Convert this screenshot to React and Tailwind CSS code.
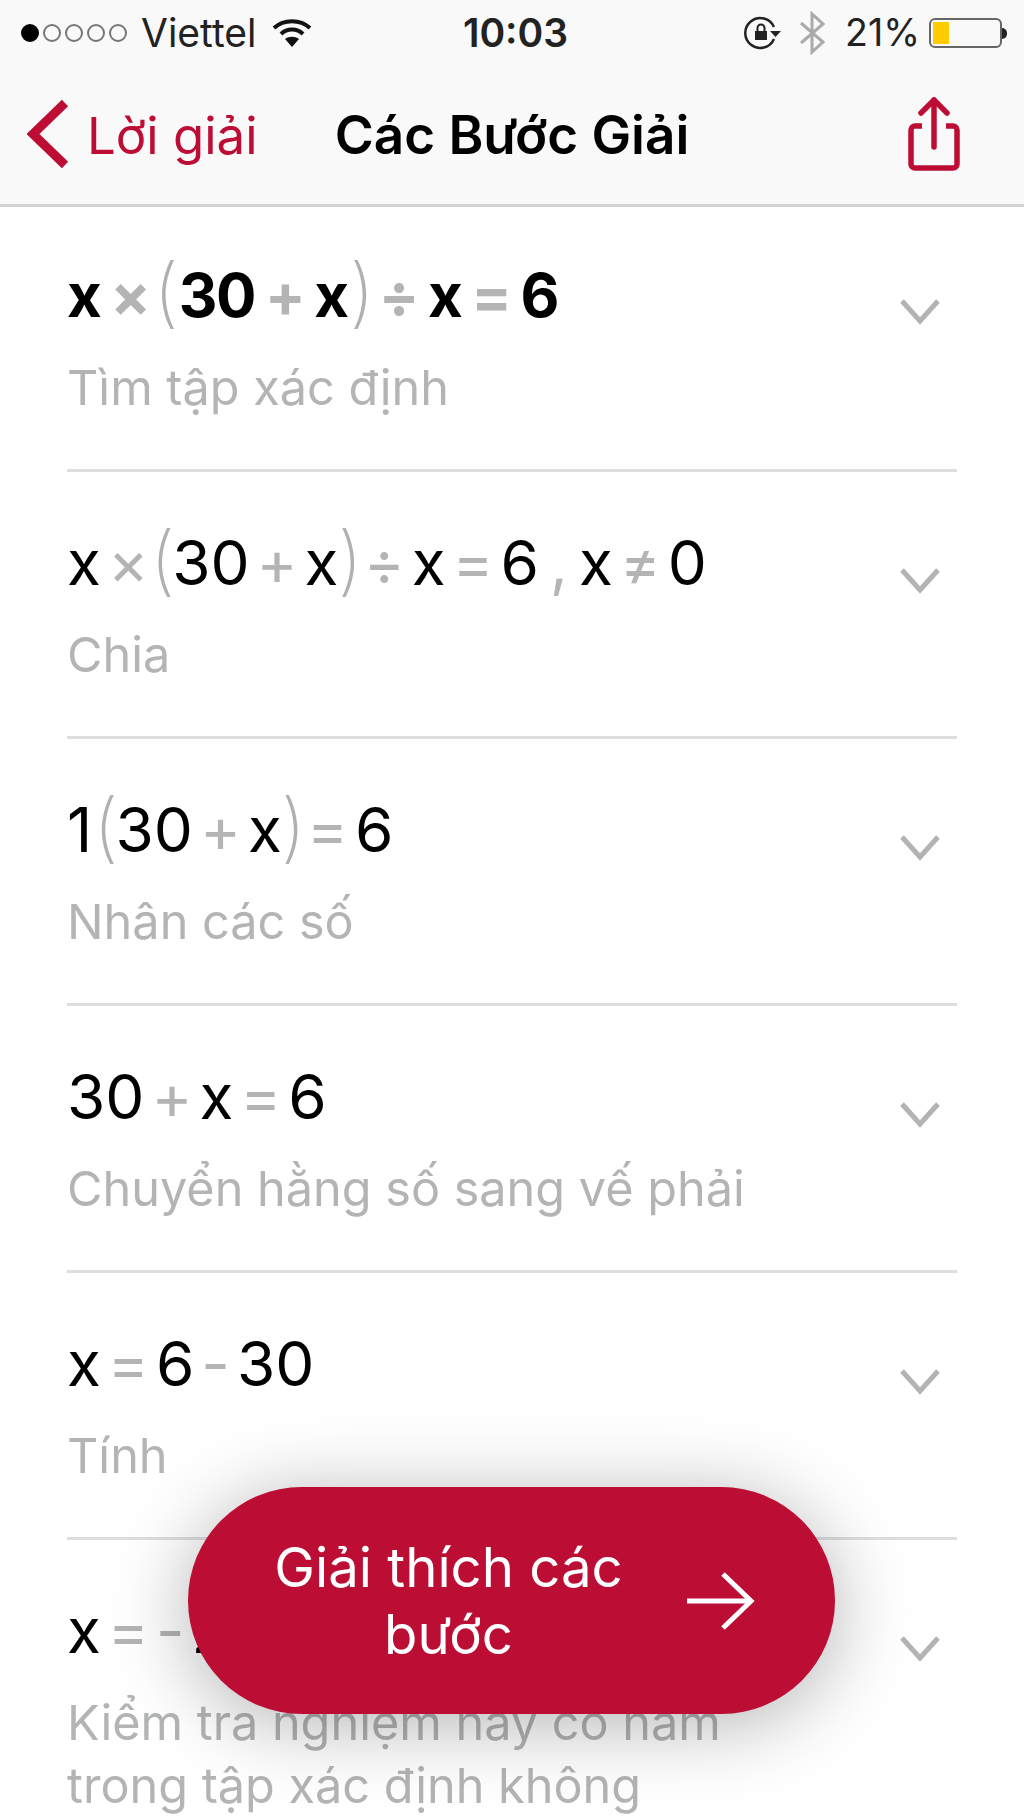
import React from 'react';

const steps = [
  { tokens: ['x', '×', '(', '30', '+', 'x', ')', '÷', 'x', '=', '6'], hint: ['Tìm tập xác định'], bold: true },
  { tokens: ['x', '×', '(', '30', '+', 'x', ')', '÷', 'x', '=', '6', ',', 'x', '≠', '0'], hint: ['Chia'] },
  { tokens: ['1', '(', '30', '+', 'x', ')', '=', '6'], hint: ['Nhân các số'] },
  { tokens: ['30', '+', 'x', '=', '6'], hint: ['Chuyển hằng số sang vế phải'] },
  { tokens: ['x', '=', '6', '-', '30'], hint: ['Tính'] },
  { tokens: ['x', '=', '-', '24'], hint: ['Kiểm tra nghiệm này có nằm', 'trong tập xác định không'] },
];

const OPERATORS = ['×', '+', '÷', '=', '≠', '-'];

function MathLine({ tokens, bold }) {
  return (
    <div className={`flex h-[70px] items-center leading-none text-black ${bold ? 'gap-[10px] text-[60px] font-bold tracking-tight' : 'gap-[7px] text-[62px] font-normal'}`}>
      {tokens.map((token, i) => {
        if (token === '(') {
          return (
            <span key={i} className="-ml-[6px] -mr-[10px] -mt-[8px] text-[76px] font-extralight leading-none tracking-normal text-[#b0b0b0]">
              {token}
            </span>
          );
        }
        if (token === ')') {
          return (
            <span key={i} className="-ml-[8px] -mr-[6px] -mt-[8px] text-[76px] font-extralight leading-none tracking-normal text-[#b0b0b0]">
              {token}
            </span>
          );
        }
        if (token === ',') {
          return (
            <span key={i} className="mx-[4px] text-[#b4b4b4]">
              {token}
            </span>
          );
        }
        if (OPERATORS.includes(token)) {
          return (
            <span key={i} className="text-[#b4b4b4]">
              {token}
            </span>
          );
        }
        return <span key={i}>{token}</span>;
      })}
    </div>
  );
}

function StepRow({ step, first, last }) {
  return (
    <div className={`flex justify-between ${last ? '' : 'border-b-[3px] border-[#dedede]'} ${first ? 'h-[265px] pt-[53px]' : 'h-[267px] pt-[56px]'}`}>
      <div>
        <MathLine tokens={step.tokens} bold={step.bold} />
        <div className={`${first ? 'mt-[26px]' : 'mt-[25px]'} text-[48.6px] leading-[63px] text-[#b2b4b6]`}>
          {step.hint.map((line) => (
            <div key={line} className="whitespace-nowrap">{line}</div>
          ))}
        </div>
      </div>
      <svg className={`mr-[16px] ${first ? 'mt-[37px]' : 'mt-[38px]'}`} width="42" height="30" viewBox="0 0 42 30" fill="none" stroke="#b3b3b3" strokeWidth="5">
        <path d="M3 4 L21 24 L39 4" />
      </svg>
    </div>
  );
}

function StatusBar() {
  return (
    <div className="grid h-[66px] grid-cols-[1fr_auto_1fr] items-center pl-[21px] pr-[17px] text-[37.5px] text-[#222]">
      <div className="flex items-center">
        <div className="flex gap-[4px]">
          <span className="h-[18px] w-[18px] rounded-full border-2 border-black bg-black" />
          <span className="h-[18px] w-[18px] rounded-full border-2 border-[#777]" />
          <span className="h-[18px] w-[18px] rounded-full border-2 border-[#777]" />
          <span className="h-[18px] w-[18px] rounded-full border-2 border-[#777]" />
          <span className="h-[18px] w-[18px] rounded-full border-2 border-[#777]" />
        </div>
        <span className="ml-[14px] text-[39px]">Viettel</span>
        <svg className="ml-[16px]" width="40" height="30" viewBox="0 0 40 30" fill="none" stroke="#111" strokeWidth="4">
          <path d="M2 10 C12 1 28 1 38 10" />
          <path d="M9 16 C15 10 25 10 31 16" />
          <path d="M20 29 L13 21 C17 18 23 18 27 21 Z" fill="#111" stroke="none" />
        </svg>
      </div>
      <div className="ml-[3px] text-[39px] font-semibold">10:03</div>
      <div className="flex items-center justify-end">
        <svg width="38" height="34" viewBox="0 0 38 34" fill="none" stroke="#222" strokeWidth="2.5">
          <path d="M30 23 A15 15 0 1 1 30 11" />
          <path d="M26 15 L37 15 L31.5 21 Z" fill="#222" stroke="none" />
          <rect x="11" y="15" width="12" height="9" fill="#222" stroke="none" />
          <path d="M13.5 15 V12 A3.5 3.5 0 0 1 20.5 12 V15" strokeWidth="2" />
        </svg>
        <svg className="ml-[17px]" width="26" height="44" viewBox="0 0 26 44" fill="none" stroke="#aaa" strokeWidth="3">
          <path d="M2 12 L24 31 L13 41 V3 L24 13 L2 32" />
        </svg>
        <span className="ml-[20px]">21%</span>
        <div className="ml-[9px] flex items-center">
          <div className="h-[30px] w-[73px] rounded-[6px] border-2 border-[#666] p-[2px]">
            <div className="h-full w-[16px] bg-[#ffcc00]" />
          </div>
          <div className="h-[11px] w-[5px] rounded-r-full bg-[#222]" />
        </div>
      </div>
    </div>
  );
}

function NavBar() {
  return (
    <div className="grid h-[141px] grid-cols-[1fr_auto_1fr] items-center border-b-[3px] border-[#d2d2d2] px-[27px] pb-[2px]">
      <div className="flex items-center text-[#bd0d35]">
        <svg width="42" height="70" viewBox="0 0 42 70" fill="none" stroke="currentColor" strokeWidth="9">
          <path d="M38 4 L6 35 L38 66" />
        </svg>
        <span className="ml-[18px] mt-[4px] text-[51px]">Lời giải</span>
      </div>
      <div className="mt-[4px] text-[53px] font-semibold text-black">Các Bước Giải</div>
      <div className="flex justify-end pr-[37px]">
        <svg width="52" height="76" viewBox="0 0 52 76" fill="none" stroke="#bd0d35" strokeWidth="5.5" strokeLinejoin="round">
          <path d="M14 30 H7 A4 4 0 0 0 3 34 V68 A4 4 0 0 0 7 72 H45 A4 4 0 0 0 49 68 V34 A4 4 0 0 0 45 30 H38" />
          <path d="M26 51 V4" strokeLinecap="round" />
          <path d="M13 17 L26 4 L39 17" strokeLinecap="round" />
        </svg>
      </div>
    </div>
  );
}

export default function App() {
  return (
    <div className="relative h-[1817px] w-[1024px] overflow-hidden bg-white font-['Inter',sans-serif]">
      <div className="bg-[#f9f9f9]">
        <StatusBar />
        <NavBar />
      </div>
      <div className="pl-[67px] pr-[67px]">
        {steps.map((step, i) => (
          <StepRow key={i} step={step} first={i === 0} last={i === steps.length - 1} />
        ))}
      </div>
      <button className="absolute left-[188px] top-[1487px] flex h-[227px] w-[647px] items-center rounded-full bg-[#bc0d35] pl-[62px] pr-[80px] text-white shadow-[0_10px_80px_rgba(0,0,0,0.3)]">
        <span className="-ml-[20px] flex-1 whitespace-nowrap text-center text-[54.5px] leading-[67px]">
          Giải thích các
          <br />
          bước
        </span>
        <svg className="ml-[20px]" width="68" height="60" viewBox="0 0 68 60" fill="none" stroke="white" strokeWidth="5">
          <path d="M0 30 H64" />
          <path d="M36 3 L64 30 L36 57" />
        </svg>
      </button>
    </div>
  );
}
